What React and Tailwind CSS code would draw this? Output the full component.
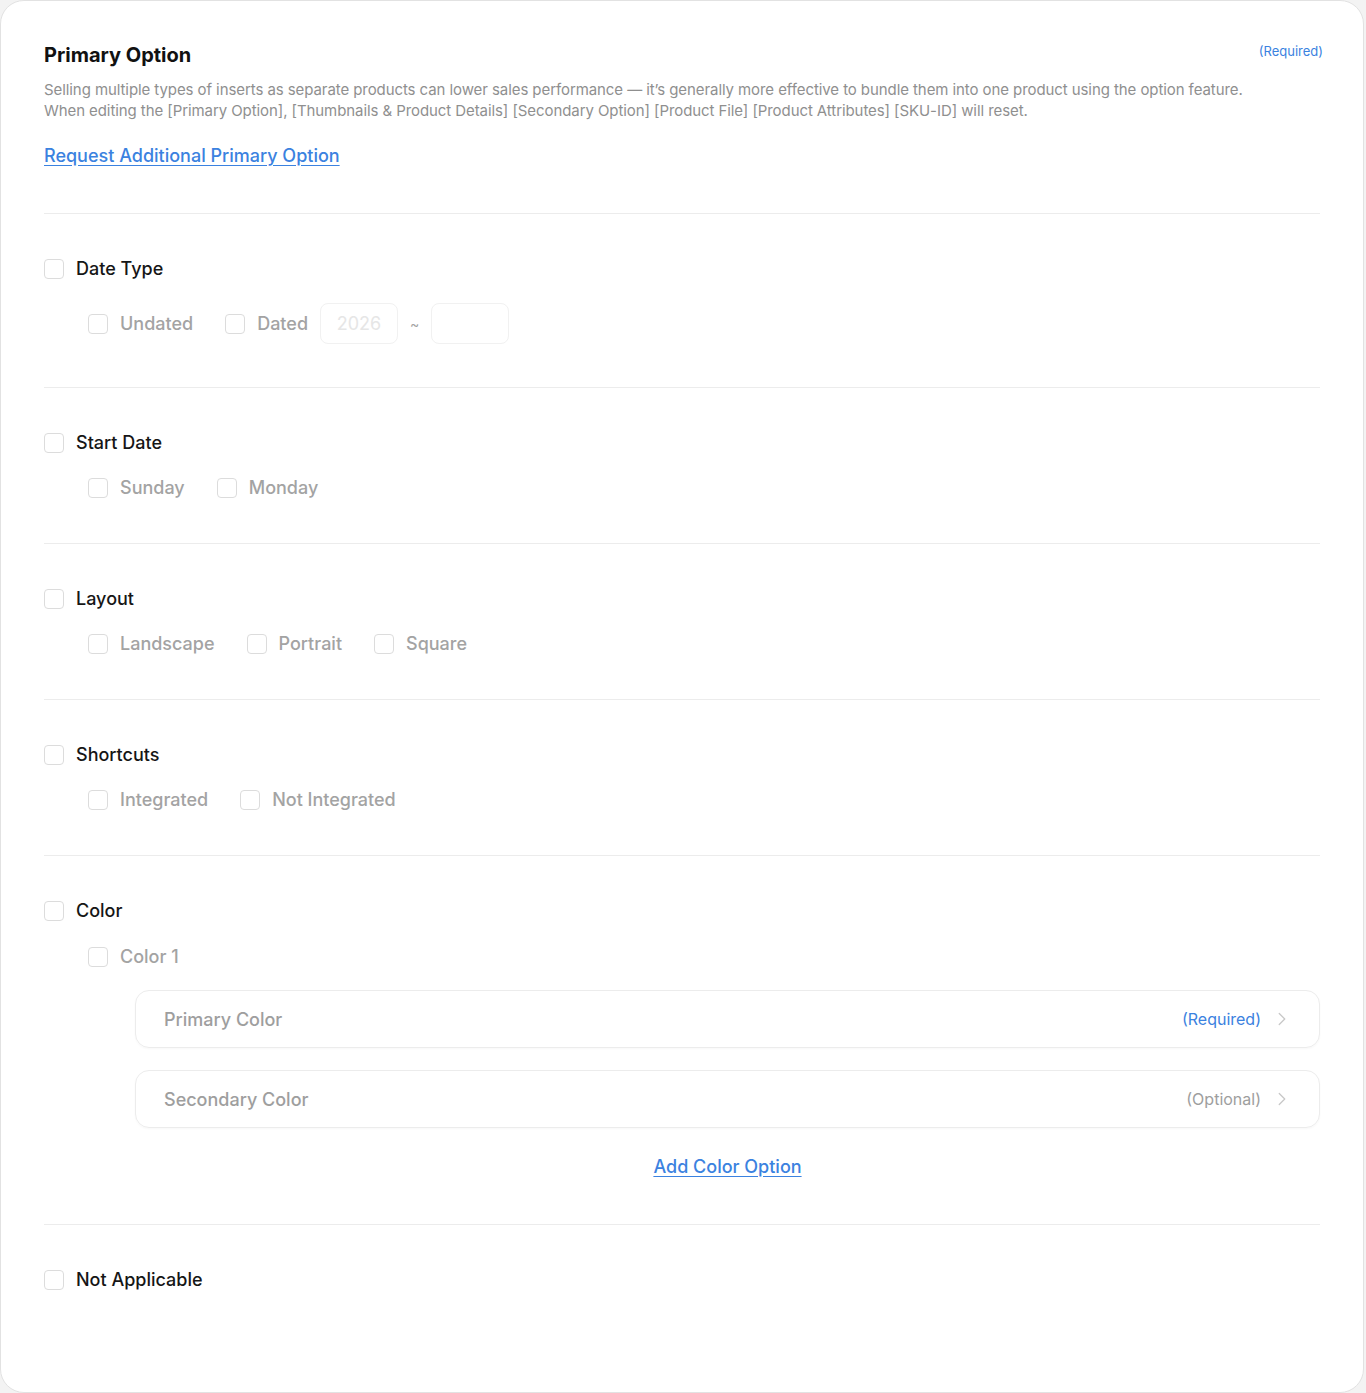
import React from "react";
import { ChevronRight } from "lucide-react";

function Box() {
  return <span className="w-5 h-5 shrink-0 rounded-[4px] border border-[#dcdcdc] bg-white" />;
}

function Check({ label, sub }) {
  return (
    <label className="flex items-center gap-3">
      <Box />
      <span
        className={
          sub
            ? "text-[18px] leading-6 font-medium text-[#a3a3a3]"
            : "text-[18px] leading-6 font-medium text-[#161616]"
        }
      >
        {label}
      </span>
    </label>
  );
}

function Section({ title, options, children, last }) {
  return (
    <div className={last ? "pt-[43px] pb-11" : "pt-[43px] pb-[43px] border-b border-[#ececec]"}>
      <Check label={title} />
      {options && (
        <div className="mt-[21px] ml-11 flex items-center gap-8">
          {options.map((o) => (
            <Check key={o} label={o} sub />
          ))}
        </div>
      )}
      {children}
    </div>
  );
}

function ColorRow({ label, note, required }) {
  return (
    <div className="h-[58px] flex items-center justify-between rounded-[14px] border border-[#ececec] pl-7 pr-[26px] shadow-[0_1px_2px_rgba(0,0,0,0.03)]">
      <span className="text-[18px] font-medium text-[#9e9e9e]">{label}</span>
      <div className="flex items-center gap-[10px]">
        <span className={required ? "text-[16px] text-[#3b82e0]" : "text-[16px] text-[#9e9e9e]"}>{note}</span>
        <ChevronRight size={22} strokeWidth={1.4} className="text-[#c8c8c8]" />
      </div>
    </div>
  );
}

export default function App() {
  return (
    <div className="bg-[#f3f3f3] w-full min-h-[1393px]" style={{ fontFamily: "Inter, 'Noto Sans', sans-serif" }}>
      <div className="w-[1364px] h-[1393px] bg-white rounded-[24px] border border-[#e2e2e2] px-[43px]">
        {/* Header */}
        <div className="pt-10 pb-[45px] border-b border-[#ececec]">
          <div className="flex items-start justify-between">
            <h1 className="text-[20px] leading-7 font-bold text-[#111]">Primary Option</h1>
            <span className="text-[13px] leading-5 text-[#3b82e0] -mr-[3px]">(Required)</span>
          </div>
          <p className="mt-[10px] text-[15px] leading-[21px] tracking-[-0.08px] text-[#8f8f8f]">
            <span className="block">
              Selling multiple types of inserts as separate products can lower sales performance — it’s generally more effective to bundle them into one product using the option feature.
            </span>
            <span className="block">
              When editing the [Primary Option], [Thumbnails &amp; Product Details] [Secondary Option] [Product File] [Product Attributes] [SKU-ID] will reset.
            </span>
          </p>
          <a href="#" className="mt-[23px] inline-block text-[18px] leading-6 font-medium text-[#3b82e0] underline underline-offset-[3px]">
            Request Additional Primary Option
          </a>
        </div>

        <Section title="Date Type">
          <div className="mt-[22px] ml-11 flex items-center">
            <Check label="Undated" sub />
            <div className="ml-8">
              <Check label="Dated" sub />
            </div>
            <div className="ml-3 w-[78px] h-[41px] rounded-[8px] border border-[#f1f1f1] flex items-center justify-center text-[18px] text-[#e6e6e6]">
              2026
            </div>
            <span className="mx-3 text-[14px] text-[#a3a3a3]">~</span>
            <div className="w-[78px] h-[41px] rounded-[8px] border border-[#f1f1f1]" />
          </div>
        </Section>

        <Section title="Start Date" options={["Sunday", "Monday"]} />
        <Section title="Layout" options={["Landscape", "Portrait", "Square"]} />
        <Section title="Shortcuts" options={["Integrated", "Not Integrated"]} />

        <Section title="Color">
          <div className="mt-[22px] ml-11">
            <Check label="Color 1" sub />
          </div>
          <div className="mt-[21px] ml-[91px] flex flex-col gap-[22px]">
            <ColorRow label="Primary Color" note="(Required)" required />
            <ColorRow label="Secondary Color" note="(Optional)" />
          </div>
          <div className="ml-[91px] mt-[27px] mb-[2px] flex justify-center">
            <a href="#" className="text-[18px] leading-6 font-medium text-[#3b82e0] underline underline-offset-[3px]">
              Add Color Option
            </a>
          </div>
        </Section>

        <Section title="Not Applicable" last />
      </div>
    </div>
  );
}
